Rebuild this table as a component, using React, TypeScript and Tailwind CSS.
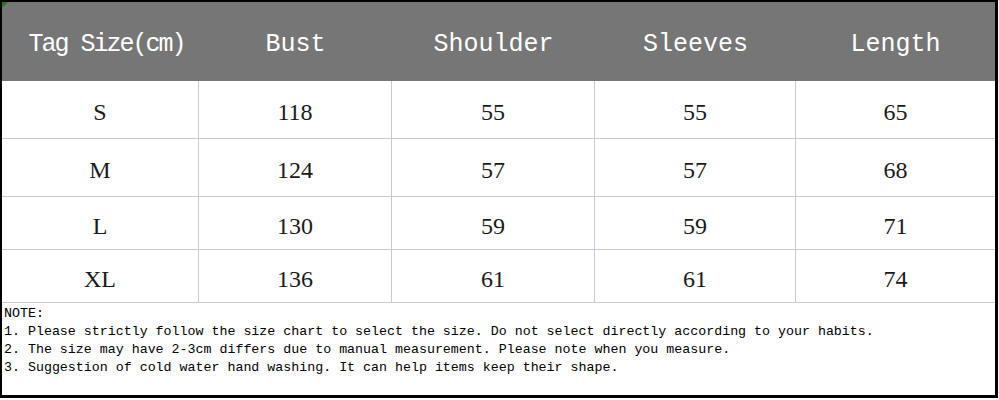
const headers = ['Tag Size(cm)', 'Bust', 'Shoulder', 'Sleeves', 'Length'];

const rows = [
  { size: 'S', values: ['118', '55', '55', '65'], h: 'h-[58px]' },
  { size: 'M', values: ['124', '57', '57', '68'], h: 'h-[58px]' },
  { size: 'L', values: ['130', '59', '59', '71'], h: 'h-[53px]' },
  { size: 'XL', values: ['136', '61', '61', '74'], h: 'h-[53px]' },
];

const notes = [
  'NOTE:',
  '1. Please strictly follow the size chart to select the size. Do not select directly according to your habits.',
  '2. The size may have 2-3cm differs due to manual measurement. Please note when you measure.',
  '3. Suggestion of cold water hand washing. It can help items keep their shape.',
];

const cols = 'grid grid-cols-[197px_193px_203px_201px_1fr]';

export default function App() {
  return (
    <div className="w-[999px] h-[400px] bg-white">
      <div className="relative w-[998px] h-[398px] border-2 border-r-[3px] border-b-[3px] border-black flex flex-col overflow-hidden">
        {/* excel corner marker */}
        <div className="absolute left-0 top-0 w-0 h-0 border-t-[6px] border-r-[6px] border-t-[#1e7a1e] border-r-transparent" />

        <div className={`${cols} h-[79px] bg-[#767676] text-white text-[25px] font-['Liberation_Mono',monospace]`}>
          {headers.map((h, i) => (
            <div
              key={h}
              className={`flex items-center justify-center pt-[6px] ${i === 0 ? 'tracking-[-2px] pl-[12px]' : ''}`}
            >
              {h}
            </div>
          ))}
        </div>

        {rows.map((r) => (
          <div
            key={r.size}
            className={`${cols} ${r.h} border-b border-[#c9c9d9] text-[#1a1a1a] text-[24px] font-['Liberation_Serif',serif]`}
          >
            {[r.size, ...r.values].map((v, i) => (
              <div
                key={i}
                className={`flex items-center justify-center pt-[5px] ${i < 4 ? 'border-r border-[#c9c9d9]' : ''}`}
              >
                {v}
              </div>
            ))}
          </div>
        ))}

        <div className="flex-1 pl-[2px] pt-[2px] text-[13.3px] leading-[18px] text-black font-['Liberation_Mono',monospace] whitespace-pre">
          {notes.map((n) => (
            <div key={n}>{n}</div>
          ))}
        </div>
      </div>
    </div>
  );
}
